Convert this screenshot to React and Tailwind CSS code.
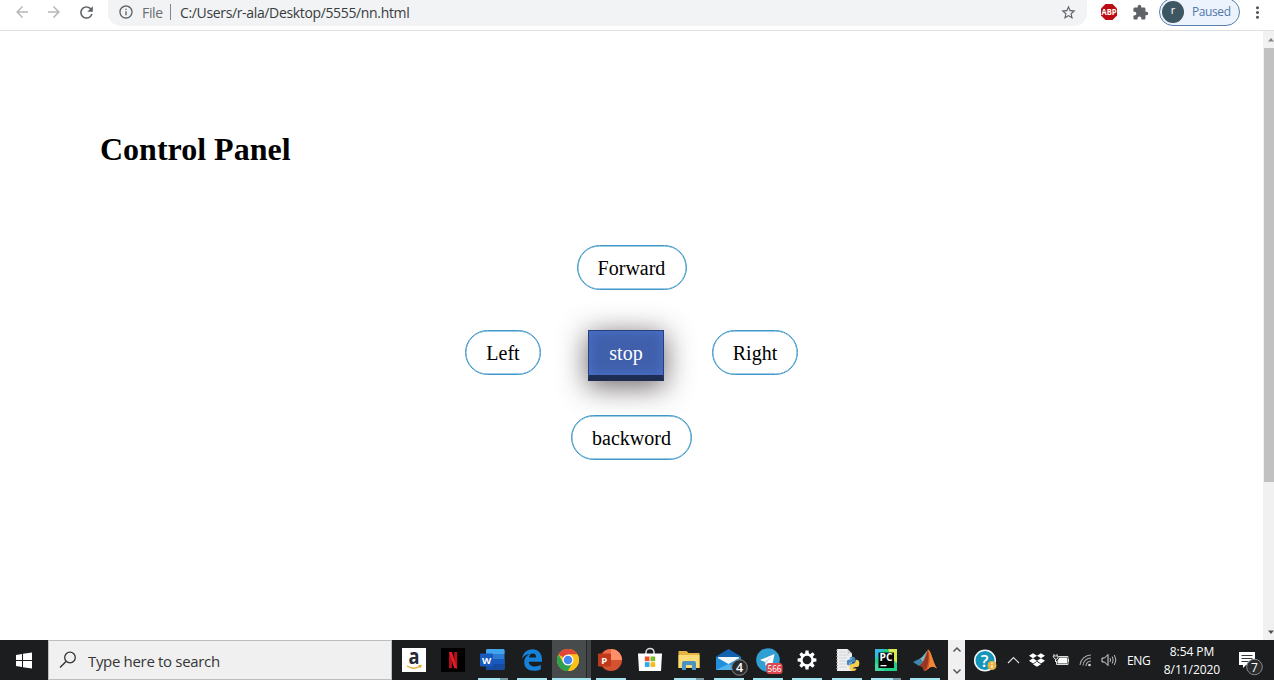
import React from "react";
import { MdArrowBack, MdArrowForward, MdRefresh, MdInfoOutline, MdStarBorder, MdExtension, MdMoreVert } from "react-icons/md";
import { FaDropbox, FaPython } from "react-icons/fa";

const Svg = ({ children, w = 24, h = 24, className = "" }) => (
  <svg width={w} height={h} viewBox={`0 0 ${w} ${h}`} className={`block shrink-0 overflow-visible ${className}`}>
    {children}
  </svg>
);

const Amazon = () => (
  <Svg>
    <rect width="24" height="24" fill="#fff" />
    <text x="12" y="16" textAnchor="middle" fontSize="22" textLength="11" lengthAdjust="spacingAndGlyphs" fontWeight="700" fontFamily="Open Sans, sans-serif" fill="#232a35">a</text>
    <path d="M5 18Q12 22.5 18.5 18M16.5 17.6L19 17.4L18.2 19.8" fill="none" stroke="#dfac35" strokeWidth="1.3" />
  </Svg>
);

const Netflix = () => (
  <Svg>
    <rect width="24" height="24" fill="#000" />
    <path d="M8 4h3v16l-3 .4zM13.2 4h3v16.4l-3-.4z" fill="#b3101b" />
    <path d="M8 4h3l5.2 16.4-3-.4z" fill="#e51b27" />
  </Svg>
);

const Word = () => (
  <Svg>
    <rect x="5" y="1" width="18.500" height="21" rx="1.5" fill="#2b7cd3" />
    <path d="M5 2.5Q5 1 6.500 1H22Q23.500 1 23.500 2.500V6H5z" fill="#41a5ee" />
    <path d="M5 11h18.500v5H5z" fill="#185abd" />
    <path d="M5 16h18.500v4.5Q23.500 22 22 22H6.500Q5 22 5 20.500z" fill="#174ba0" />
    <rect x="-1" y="5.500" width="13" height="13" rx="1" fill="#185abd" />
    <text x="5.500" y="15.500" textAnchor="middle" fontSize="9.500" fontWeight="700" fontFamily="Open Sans, sans-serif" fill="#fff">W</text>
  </Svg>
);

const Edge = () => (
  <Svg>
    <path
      d="M2 10.800C3.200 4.800 7 1.300 12.200 1.300c6.300 0 9.800 4.300 9.800 10.200v2.200H8.800c.2 3.300 2.700 4.700 6 4.700 2.300 0 4.300-.7 6-1.700v4.500c-1.800 1-4.200 1.600-7 1.600-6 0-9.600-3.500-9.600-8.500 0-3.700 2-6.700 5.400-8.200C6 6.500 3.600 8.200 2 10.800zM9 9.600h7.200c0-2.700-1.300-4-3.500-4-2.100 0-3.400 1.700-3.700 4z"
      fill="#1681d8"
    />
  </Svg>
);

const Chrome = () => (
  <Svg className="-ml-1.5">
    <circle cx="12" cy="12" r="11" fill="#fbc116" />
    <path d="M12 12L2.470 6.500A11 11 0 0 1 21.530 6.500H12z" fill="#e0463a" />
    <path d="M2.470 6.500A11 11 0 0 0 12 23L16.760 14.750L12 12L7.240 14.750z" fill="#2da14d" />
    <path d="M12 6.500h9.530A11 11 0 0 1 12 23l4.760-8.250z" fill="#fbc116" />
    <circle cx="12" cy="12" r="5.500" fill="#fff" />
    <circle cx="12" cy="12" r="4.300" fill="#4587ef" />
  </Svg>
);

const PowerPoint = () => (
  <Svg>
    <circle cx="12" cy="12" r="11" fill="#d35230" />
    <path d="M12 1a11 11 0 0 1 11 11H12z" fill="#ff8f6b" />
    <path d="M1 12a11 11 0 0 1 11-11v11z" fill="#ed6c47" />
    <rect x="-1" y="5.500" width="13" height="13" rx="1" fill="#c0391c" />
    <text x="5.300" y="15.500" textAnchor="middle" fontSize="9.500" fontWeight="700" fontFamily="Open Sans, sans-serif" fill="#fff">P</text>
  </Svg>
);

const Store = () => (
  <Svg>
    <path d="M8 6V4.500C8-.8 16-.8 16 4.500V6" fill="none" stroke="#ddd" strokeWidth="1.500" />
    <path d="M0 5.500h24l-1 17.500H1z" fill="#fff" />
    <path d="M6.800 8.500h4.700v4.700H6.800z" fill="#e95325" />
    <path d="M12.500 8.500h4.700v4.700h-4.700z" fill="#7fb928" />
    <path d="M6.800 14.200h4.700v4.700H6.800z" fill="#28a8ea" />
    <path d="M12.500 14.200h4.700v4.700h-4.700z" fill="#fbb91b" />
  </Svg>
);

const Folder = () => (
  <Svg>
    <path d="M1.500 3h8l2 2H22.500v15h-21z" fill="#e5b443" />
    <path d="M1.500 7h21v13h-21z" fill="#fbdc77" />
    <path d="M5 22v-7q0-2 2-2h10q2 0 2 2v7h-4v-5H9v5z" fill="#4b93c0" />
  </Svg>
);

const Mail = () => (
  <Svg>
    <path d="M-1 8.500L11.500 1 24 8.500V22H-1z" fill="#1362b2" />
    <path d="M1 9h21v8H1z" fill="#f3f8fc" />
    <path d="M-1 9l12.500 7L24 9v13H-1z" fill="#238fdc" />
    <path d="M-1 22l12.500-6L24 22z" fill="#51b4ee" />
    <circle cx="22.500" cy="19.500" r="7.800" fill="#292b2d" stroke="#888" />
    <text x="22.500" y="24.200" textAnchor="middle" fontSize="12.500" fontWeight="600" fontFamily="Open Sans, sans-serif" fill="#fff">4</text>
  </Svg>
);

const Telegram = () => (
  <Svg>
    <circle cx="12" cy="12" r="11.800" fill="#319fd2" />
    <path d="M4 12L18.500 6 16 18.500 11.800 15.300 9.500 18 8.800 13.700z" fill="#fff" />
    <path d="M9 13.700L16 8.500l-5.500 6L9.500 18z" fill="#b9d6e6" />
    <rect x="10.500" y="15" width="16" height="11" rx="3" fill="#df4650" />
    <text x="18.500" y="24.300" textAnchor="middle" fontSize="9.500" textLength="14" lengthAdjust="spacingAndGlyphs" fontFamily="Open Sans, sans-serif" fill="#fff">566</text>
  </Svg>
);

const Gear = () => (
  <Svg>
    <g fill="#fff">
      {[0, 45, 90, 135, 180, 225, 270, 315].map((a) => (
        <path key={a} d="M10 6.500L10.500 2.600h3L14 6.500z" transform={`rotate(${a} 12 12)`} />
      ))}
    </g>
    <circle cx="12" cy="12" r="5.600" fill="none" stroke="#fff" strokeWidth="2.500" />
  </Svg>
);

const PythonFile = () => (
  <Svg>
    <path d="M2 1h10.500L17 5.500V23H2z" fill="#eef0f0" />
    <path d="M12.500 1v4.500H17" fill="#c8cccc" />
    <path d="M4 4h7M4 7h10M4 10h8M4 13h7M4 16h7M4 19h8" stroke="#cfd3d4" strokeWidth="1" />
    <path d="M2 2v21" stroke="#999" strokeDasharray="1 2" strokeWidth="1.500" />
    <svg x="10" y="8" width="15" height="15" viewBox="0 0 448 512">
      <FaPython size="448" color="#4286bd" />
    </svg>
    <path d="M17.500 16q3 0 3.300-4h1.500q2 0 2 3.500t-2.500 3.500h-3.500v1.500h3v1q-1 1.500-3.500 1.500-3.300 0-3.300-3v-1.500q0-2.500 3-2.500z" fill="#f8cf49" />
  </Svg>
);

const PyCharm = () => (
  <Svg>
    <path d="M1 1h12l10 4v18H1z" fill="#21cf89" />
    <path d="M1 1h9L1 12z" fill="#35bbe3" />
    <path d="M14 1h9v14l-5-4z" fill="#d9e953" />
    <path d="M1 14v9h10z" fill="#43d6a0" />
    <rect x="4.500" y="4.500" width="15.500" height="15.500" fill="#050505" />
    <text x="12" y="13.200" textAnchor="middle" fontSize="10.500" textLength="13" lengthAdjust="spacingAndGlyphs" fontWeight="700" fontFamily="Open Sans, sans-serif" fill="#fff">PC</text>
    <path d="M6.500 17h6v1.300h-6z" fill="#fff" />
  </Svg>
);

const Matlab = () => (
  <Svg>
    <path d="M0 14l7-3.500 3.500 4.500L6 18z" fill="#3c86b0" />
    <path d="M7 10.500C10 9 12 5 15 1.500L10.500 15z" fill="#75bac9" />
    <path d="M15 1.500c3 1 5 13 9 19-4-3-6-3-9 .5-2 2-3 2-4 2-1-4-2-5-5-5 5-2 6-11 9-16.500z" fill="#d95a27" />
    <path d="M15 1.500c-2 7-4 13-9 16.500 3-.500 4 1 5 5 5-3 5-14 4-21.500z" fill="#963723" />
    <path d="M15 1.500c2 5 2 10 1 16l-1.500 4q4-5 9.500-1C20 14.500 18 2.500 15 1.500z" fill="#ef873b" />
  </Svg>
);

const apps = [
  { Icon: Amazon },
  { Icon: Netflix },
  { Icon: Word, open: true, stacked: true },
  { Icon: Edge, open: true },
  { Icon: Chrome, active: true },
  { Icon: PowerPoint, open: true },
  { Icon: Store },
  { Icon: Folder, open: true, stacked: true },
  { Icon: Mail, open: true },
  { Icon: Telegram, open: true },
  { Icon: Gear, open: true },
  { Icon: PythonFile, open: true },
  { Icon: PyCharm, open: true, stacked: true },
  { Icon: Matlab, open: true },
];

function AppButton({ Icon, open, stacked, active }) {
  return (
    <div className={`flex h-10 w-[39.33px] shrink-0 flex-col items-center justify-between pt-2 ${active ? "bg-[linear-gradient(90deg,#484b4c_0_34px,#242627_34px_35px,#414445_35px)]" : ""}`}>
      <div className="flex h-6 w-6 justify-center"><Icon /></div>
      <div className={`flex h-0.5 ${active ? "w-full" : "w-[30px]"} ${open || active ? "bg-[#a3e6f2]" : ""}`}>
        {stacked && <div className="ml-auto w-2 bg-[#7799a6]" />}
      </div>
    </div>
  );
}

function BrowserBar() {
  return (
    <header className="flex h-[31px] shrink-0 items-start border-b border-[#dfe0e2] bg-white">
      <div className="flex h-6 w-[108px] shrink-0 items-center gap-3.5 pl-[13px] text-[#5f6368]">
        <MdArrowBack size={18} className="text-[#b5b7b9]" />
        <MdArrowForward size={18} className="text-[#b5b7b9]" />
        <MdRefresh size={19} />
      </div>
      <div className="flex h-[26px] w-[979px] shrink-0 items-center rounded-b-[13px] bg-[#f1f3f4] pr-2.5 pb-0.5 pl-2.5 font-['Open_Sans',sans-serif] text-[14px] whitespace-nowrap">
        <MdInfoOutline size={16} className="shrink-0 text-[#5f6368]" />
        <span className="ml-2 w-[28px] text-[14px] tracking-[-0.35px] text-[#6a6d71]">File</span>
        <span className="h-4 w-px bg-[#84878a]" />
        <span className="ml-[9px] text-[14px] tracking-[-0.35px] text-[#393c40]">C:/Users/r-ala/Desktop/5555/nn.html</span>
        <MdStarBorder size={17} className="ml-auto shrink-0 text-[#5f6368]" />
      </div>
      <div className="flex h-6 flex-1 items-center">
        <Svg w={18} h={18} className="ml-[13px]">
          <path d="M5.500 1h7L17 5.500v7L12.500 17h-7L1 12.500v-7z" fill="#bd0d14" />
          <text x="9" y="12" textAnchor="middle" fontSize="8.500" textLength="15" lengthAdjust="spacingAndGlyphs" fontWeight="700" fontFamily="Open Sans, sans-serif" fill="#fff">ABP</text>
        </Svg>
        <MdExtension size={17} className="ml-3.5 text-[#5f6368]" />
        <div className="-mt-px ml-2.5 flex h-[28px] w-[81px] shrink-0 items-center rounded-full border-[1.5px] border-[#587fae] bg-[#edf3fc] pl-0.5">
          <span className="flex h-[22px] w-[22px] items-center justify-center rounded-full bg-[#3e5661] pb-0.5 font-['Open_Sans',sans-serif] text-[11px] text-white">r</span>
          <span className="ml-2 font-['Open_Sans',sans-serif] text-[12px] tracking-[-0.4px] text-[#4f78ad]">Paused</span>
        </div>
        <MdMoreVert size={19} className="ml-2 shrink-0 text-[#55585c]" />
      </div>
    </header>
  );
}

const pill = "flex h-[45px] items-center justify-center rounded-[23px] border border-[#3f98c9] pt-px shadow-[inset_0_0_0_0.4px_#3f98c9]";

function ControlPanel() {
  return (
    <main className="flex-1 pt-[96px] font-['Liberation_Serif',serif] text-black">
      <h1 className="ml-[100px] h-[44px] text-[32px] leading-[44px] font-bold">Control Panel</h1>
      <div className="mt-[74px] flex w-[1263px] flex-col items-center gap-10 text-[20px] leading-6">
        <button className={`${pill} w-[110px]`}>Forward</button>
        <div className="flex h-[45px] items-start">
          <button className={`${pill} w-[76px]`}>Left</button>
          <button className="ml-[47px] h-[51px] w-[76px] border border-b-[6px] border-[#293f79] border-b-[#1e2d52] bg-[#4060ac] text-white shadow-[inset_0_0_12px_#4c73d0,0_5px_28px_1px_rgba(50,40,45,0.7)]">stop</button>
          <button className={`${pill} ml-12 w-[86px]`}>Right</button>
        </div>
        <button className={`${pill} w-[121px]`}>backword</button>
      </div>
    </main>
  );
}

function Scrollbar() {
  return (
    <div className="flex w-[11px] shrink-0 flex-col items-center bg-[#f1f1f1]">
      <Svg w={11} h={17}><path d="M5 10.500L8 7l3 3.500z" fill="#858585" /></Svg>
      <div className="ml-px h-[434px] w-[10px] bg-[#c1c1c1]" />
      <Svg w={11} h={17} className="mt-auto"><path d="M5 7.500h6L8 11z" fill="#505050" /></Svg>
    </div>
  );
}

function Tray() {
  return (
    <div className="flex h-10 min-w-0 flex-1 items-center font-['Open_Sans',sans-serif] text-white">
      <Svg w={24} h={24} className="ml-2">
        <circle cx="12" cy="12.500" r="10.300" fill="#1795b9" stroke="#f4fafc" strokeWidth="1.500" />
        <text x="11.500" y="18.500" textAnchor="middle" fontSize="17" fontWeight="600" fontFamily="Open Sans, sans-serif" fill="#fff">?</text>
        <circle cx="19" cy="17.500" r="4.500" fill="#e9b447" />
        <path d="M19 14.800v1.200M19 17v3" stroke="#fff" strokeWidth="1.200" />
      </Svg>
      <Svg w={14} h={14} className="ml-[9px]"><path d="M2 10l5.500-5.500L13 10" fill="none" stroke="#ddd" strokeWidth="1.200" /></Svg>
      <FaDropbox size={16} className="ml-[9px] shrink-0" />
      <Svg w={18} h={16} className="ml-[7px]">
        <path d="M6.500 4.500H16v8H4.500V9" fill="none" stroke="#ddd" />
        <path d="M7.500 5.500H15v6H5.500V8.500z" fill="#fff" />
        <path d="M16.500 7v3M2 2v2M5 2v2M1 4h5v2q-2 3-4 0zM3.500 7v3" fill="none" stroke="#ddd" strokeWidth="1" />
      </Svg>
      <Svg w={16} h={16} className="ml-2">
        <path d="M2 13A11 11 0 0 1 13 3M5 13.500a8 8 0 0 1 8-7.500M8 14a5 5 0 0 1 5-5" fill="none" stroke="#aaa" strokeWidth="1.100" />
        <circle cx="11.500" cy="13" r="1.300" fill="#ddd" />
      </Svg>
      <Svg w={18} h={16} className="ml-[6px]">
        <path d="M2 6h2.500L8 2.500v11L4.500 10H2z" fill="none" stroke="#ddd" />
        <path d="M10 6q1 2 0 4M12.200 4.500q2 3.500 0 7M14.400 3q3 5 0 10" fill="none" stroke="#bbb" />
      </Svg>
      <span className="ml-[9px] w-[24px] pt-px text-[12px] tracking-[-0.4px]">ENG</span>
      <div className="ml-2 flex w-[66px] flex-col items-center pt-[2px] text-[12px] leading-[18px] tracking-[-0.05px] whitespace-nowrap">
        <span>8:54 PM</span>
        <span>8/11/2020</span>
      </div>
      <Svg w={24} h={24} className="ml-[14px]">
        <path d="M0 4h16v13H7l-3 3v-3H0z" fill="#fff" />
        <path d="M2.500 7.500h11M2.500 10.500h11M2.500 13.500h7" stroke="#36383a" />
        <circle cx="15.500" cy="19" r="7.800" fill="#2b2d2f" stroke="#888" />
        <text x="15.500" y="23.500" textAnchor="middle" fontSize="12" fontFamily="Open Sans, sans-serif" fill="#fff">7</text>
      </Svg>
    </div>
  );
}

function Taskbar() {
  return (
    <footer className="flex h-10 shrink-0 bg-[#1b1d1f]">
      <div className="flex w-12 shrink-0 items-center justify-center">
        <Svg w={17} h={17} className="-ml-px"><path d="M1 3l6-1v6H1zM8 1.800l9-1.300V8H8zM1 9h6v6l-6-1zM8 9h9v7.500l-9-1.300z" fill="#fff" /></Svg>
      </div>
      <div className="flex w-[344px] shrink-0 items-center border border-[#bdbdbd] bg-[#f0f0f0] pl-2.5">
        <Svg w={18} h={18}><circle cx="11" cy="6.500" r="5.300" fill="none" stroke="#333" strokeWidth="1.300" /><path d="M7 10.500L1 16.500" stroke="#333" strokeWidth="1.500" /></Svg>
        <span className="ml-[11px] pt-0.5 font-['Open_Sans',sans-serif] text-[15px] tracking-[-0.33px] text-[#353535]">Type here to search</span>
      </div>
      <div className="flex w-[556px] shrink-0 pl-[2.5px]">
        {apps.map((app, i) => <AppButton key={i} {...app} />)}
      </div>
      <div className="flex w-[17px] shrink-0 flex-col items-center justify-between bg-[#f0f0f0] py-1">
        <Svg w={10} h={10}><path d="M1.500 7.500L5 4l3.500 3.500" fill="none" stroke="#555" strokeWidth="1.500" /></Svg>
        <Svg w={10} h={10}><path d="M1.500 3.500L5 7l3.500-3.500" fill="none" stroke="#555" strokeWidth="1.500" /></Svg>
      </div>
      <Tray />
    </footer>
  );
}

export default function App() {
  return (
    <div className="flex h-[680px] w-[1274px] flex-col overflow-hidden bg-white">
      <BrowserBar />
      <div className="flex min-h-0 flex-1">
        <ControlPanel />
        <Scrollbar />
      </div>
      <Taskbar />
    </div>
  );
}
